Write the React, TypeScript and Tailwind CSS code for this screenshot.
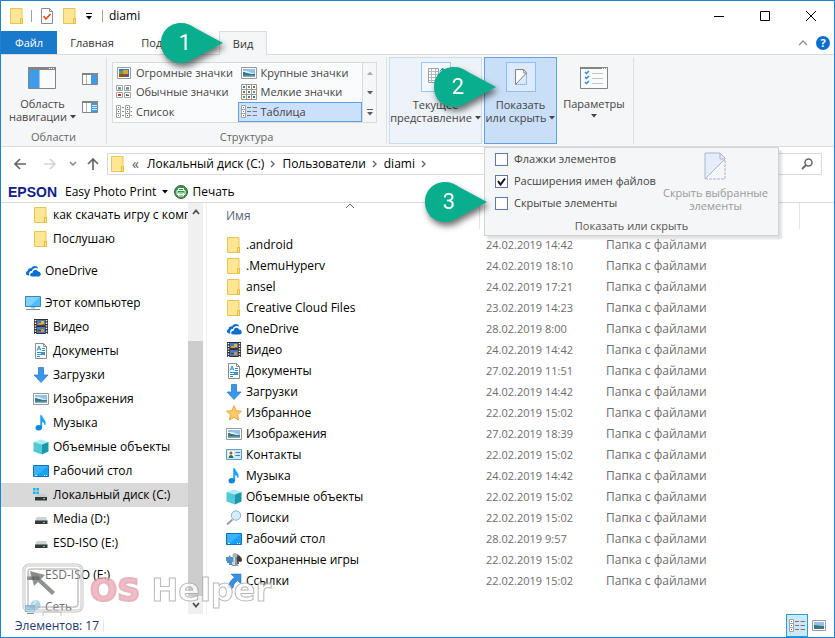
import type { ReactNode } from "react";

type IconName =
  | "folder" | "onedrive" | "pc" | "video" | "doc" | "download" | "picture" | "music" | "cube"
  | "desktop" | "sysdrive" | "drive" | "network" | "star" | "contact" | "search" | "games" | "link"
  | "huge" | "medium" | "small" | "list" | "table";

const shapes: Record<IconName, ReactNode> = {
  folder: (
    <>
      <path d="M1.500.5h11.500v10.500h.5v4.500h-12z" fill="#ffe694" stroke="#e9c44f" />
      <path d="M11.500 15.500v-5h2v5z" fill="#ffdf7e" stroke="#e6bd3f" />
    </>
  ),
  onedrive: (
    <>
      <path d="M3.500 12.500C.5 12.500 0 9 2.500 8 3 5.500 5 5 6 5.500 7 2.500 12 2 13.200 5.500 10 4 7 6 6.800 8 4.500 8 3.500 10 4.500 12.500z" fill="#0c6fd0" />
      <path d="M7 13.500c-2.500 0-2.500-3.800.6-3.800C7.600 6.500 12 5.500 13 8.500c3.500.2 3.700 5 .5 5z" fill="#0c6fd0" />
    </>
  ),
  pc: (
    <>
      <path d="M.5 1.500h15v10H.5z" fill="#4dbdfb" stroke="#3a86b5" />
      <path d="M1 2h14L5 11H1z" fill="#7fd2ff" />
      <path d="M6 12h4v1.500H6z" fill="#9dc3d8" />
      <path d="M1 14.500h14" stroke="#7890a0" />
    </>
  ),
  video: (
    <>
      <path d="M1 0h14v15H1z" fill="#2f2f33" />
      <path d="M2.500 1v14M13.500 1v14" stroke="#fff" strokeWidth="1.500" strokeDasharray="1.300 1.300" />
      <path d="M4 1h8v6H4zM4 8h8v6H4z" fill="#4978c8" />
      <path d="M5 4h4v2H5zM8 10h3v3H8z" fill="#c99a38" />
      <path d="M8 2h3v3H8z" fill="#e0bb30" />
      <path d="M4 6h8v1H4zM5 11h3v1H5z" fill="#5a3522" />
    </>
  ),
  doc: (
    <>
      <path d="M2.500.5h8l3 3v12h-11z" fill="#fff" stroke="#8c8c8c" />
      <path d="M10.500.5v3h3" fill="none" stroke="#8c8c8c" />
      <path d="M4 7.500 6 3l2 4.500M5 6h2M9 5.500h3M9 7.500h3M4 9.500h4M4 11.500h4M4 13.500h3" stroke="#2c8fd4" fill="none" />
      <path d="M8 9h4v3H8z" fill="#4a8fbe" />
    </>
  ),
  download: <path d="M5.500.5h5V8h4.500L8 15.500 1 8h4.500z" fill="#3996ea" stroke="#2d7dca" strokeWidth=".8" />,
  picture: (
    <>
      <path d="M.5 2.500h15v11H.5z" fill="#fff" stroke="#9a9a9a" />
      <path d="M2 4h12v8H2z" fill="#8fc2ee" />
      <path d="M2 6h4l8 3v3H2z" fill="#dff0f9" />
      <path d="M2 7c3 0 4 2 12 2v3H2z" fill="#3f7481" />
      <path d="M2 10.500h12V12H2z" fill="#77aec2" />
    </>
  ),
  music: (
    <>
      <path d="M7.500.5h1.400C9.500 4 13.500 5 12 10c-.6-2-1.600-3-3.100-3.200V13H7.500z" fill="#1ba1f2" stroke="#1ba1f2" strokeWidth=".5" />
      <ellipse cx="5.700" cy="12.700" rx="3.200" ry="2.700" fill="#1487dc" />
    </>
  ),
  cube: (
    <>
      <path d="M8 .5 15.500 3 9 5.500.5 3z" fill="#a8edf2" />
      <path d="M.5 3 9 5.500v10L.5 12.500z" fill="#53c9d6" />
      <path d="M9 5.500 15.500 3v9.500L9 15.500z" fill="#1b98aa" />
    </>
  ),
  desktop: (
    <>
      <path d="M.5 2.500h15v11H.5z" fill="#16a2f7" stroke="#1272b8" />
      <path d="M1 3h14L4 12H1z" fill="#39b3ff" />
      <path d="M2 12.500h2M11 12.500h1M13 12.500h1" stroke="#d5efff" />
    </>
  ),
  sysdrive: (
    <>
      <path d="M0 1h2.600v2.600H0zM3.400 1H6v2.600H3.400zM0 4.400h2.600V7H0zM3.400 4.400H6V7H3.400z" fill="#16b5f2" />
      <path d="M4 7h9l1 3H2z" fill="#c9cdd0" />
      <path d="M2 10h12v3.500H2z" fill="#35383b" />
      <path d="M10 11h2v1h-2z" fill="#5ee05e" />
    </>
  ),
  drive: (
    <>
      <path d="M3.500 6h9.500l1.500 4H2z" fill="#cfd2d4" />
      <path d="M2 9.500h12.500V13H2z" fill="#35383b" />
      <path d="M10 11h2v1h-2z" fill="#5ee05e" />
    </>
  ),
  network: (
    <>
      <circle cx="10.500" cy="6" r="5" fill="#6db8e8" />
      <path d="M8 2c3-1 3 2 1 3s1 4 4 3" stroke="#bde4c4" fill="none" strokeWidth="1.500" />
      <path d="M.5 6.500h9v6h-9z" fill="#40b2f5" stroke="#3a86b5" />
      <path d="M2 14.500h7" stroke="#7890a0" />
    </>
  ),
  star: <path d="m8 .7 2.200 5 5.300.5-4 3.600 1.200 5.300L8 12.300l-4.700 2.800 1.200-5.300-4-3.600 5.300-.5z" fill="#ffc96b" stroke="#ee9c35" strokeWidth=".9" />,
  contact: (
    <>
      <path d="M.5 2.500h15v10H.5z" fill="#cfe9f6" stroke="#5c9fbe" />
      <path d="M2 4h6v7H2z" fill="#fff" />
      <circle cx="5" cy="6" r="1.600" fill="#8a5f3b" />
      <path d="M2.500 11c0-4 5-4 5 0z" fill="#34704f" />
      <path d="M9.500 5.500H14M9.500 8.500H14" stroke="#3c86b0" />
    </>
  ),
  search: (
    <>
      <path d="m1 14.500 5.500-5" stroke="#8d9aa5" strokeWidth="1.800" />
      <circle cx="10" cy="5.500" r="4.700" fill="#d5ecfa" stroke="#8eb0c7" />
    </>
  ),
  games: (
    <>
      <path d="M0 5h3c-1-2 2-2 1.500 0H7v3h1.500v2H6v3H3v-2H1V9H0z" fill="#4c94c8" />
      <path d="M11 2c2 1.500 5 3 5 6 0 2-2 2.500-3.500 1.500L13 12H9V3z" fill="#3b4045" />
      <circle cx="9" cy="3.500" r="2.500" fill="#aab5ba" />
      <path d="M7.500 5h3l1 7 1 2h-7l1-2z" fill="#8a989f" />
      <path d="M8 5h1v8H7z" fill="#d8e0e4" />
    </>
  ),
  link: <path d="M5 1h10v10l-3.300-3.300C8.500 9.500 7.500 12 7 15H2c.3-4 2.500-7.500 6.300-10.700z" fill="#3b8fe0" stroke="#2c78c4" strokeWidth=".6" />,
  huge: (
    <>
      <path d="M1.500 2.500h13v11h-13z" fill="#fff" stroke="#9a9a9a" />
      <path d="M3 4h10v8H3z" fill="#3f6fd0" />
      <path d="M3 6h5v3H3z" fill="#50a648" />
      <path d="M7 5h5v5H7z" fill="#d4a62b" />
      <path d="M3 9h10v3H3z" fill="#9c4a24" />
      <path d="M9 10h4v2H9z" fill="#3b62b5" />
    </>
  ),
  medium: (
    <>
      <path d="M.5 1.500h6v5h-6zM8.500 1.500h6v5h-6zM.5 8.500h6v5h-6zM8.500 8.500h6v5h-6z" fill="#fff" stroke="#a3a3a3" />
      <path d="M2 3h3v2H2zM10 3h3v2h-3z" fill="#5b9dd8" />
      <path d="M2 5h3M10 5h3" stroke="#547d5c" />
      <path d="M2 10h3v2H2z" fill="#c7332b" />
      <path d="M10 10h3v2h-3z" fill="#3060c0" />
      <path d="M11 10h2v1h-2z" fill="#e0ae28" />
    </>
  ),
  small: (
    <>
      <path d="M.5.5h15v15H.5zM5.500 0v16M10.500 0v16M0 5.500h16M0 10.500h16" fill="#fff" stroke="#9a9a9a" />
      <path d="M2 2h2v2H2zM7 7h2v2H7zM12 12h2v2h-2z" fill="#4477a8" />
      <path d="M12 2h2v2h-2zM2 7h2v2H2zM7 12h2v2H7z" fill="#a25f3b" />
      <path d="M7 2h2v2H7zM12 7h2v2h-2zM2 12h2v2H2z" fill="#5d9a63" />
    </>
  ),
  list: (
    <>
      <path d="M.5 1.500h4v12h-4zM.5 5.500h4M.5 9.500h4M9.500 1.500h4v12h-4zM9.500 5.500h4M9.500 9.500h4" fill="#fff" stroke="#a3a3a3" />
      <path d="M2 3h1v1H2zM11 7h1v1h-1zM2 11h1v1H2z" fill="#4477a8" />
      <path d="M2 7h1v1H2zM11 3h1v1h-1zM11 11h1v1h-1z" fill="#c03a2c" />
      <path d="M6 3.500h2M6 7.500h2M6 11.500h2M14.500 3.500H16M14.500 7.500H16M14.500 11.500H16" stroke="#8a8a8a" />
    </>
  ),
  table: (
    <>
      <path d="M.5 1.500h4v12h-4zM.5 5.500h4M.5 9.500h4" fill="#fff" stroke="#a3a3a3" />
      <path d="M2 3h1v1H2zM2 7h1v1H2z" fill="#4477a8" />
      <path d="M2 11h1v1H2z" fill="#c03a2c" />
      <path d="M6 3.500h4M11.500 3.500H16M6 7.500h4M11.500 7.500H16M6 11.500h4M11.500 11.500H16" stroke="#777" />
    </>
  ),
};

function Icon({ name }: { name: IconName }) {
  return (
    <svg viewBox="0 0 16 16" className="size-4 shrink-0" aria-hidden="true">
      {shapes[name]}
    </svg>
  );
}

function Caret({ className = "" }: { className?: string }) {
  return (
    <svg viewBox="0 0 6 4" className={`inline-block h-1 w-1.5 shrink-0 ${className}`} aria-hidden="true">
      <path d="M0 0h6L3 3.500z" fill="currentColor" />
    </svg>
  );
}

function Pin({ n, className }: { n: number; className: string }) {
  return (
    <span
      className={`pointer-events-none absolute z-30 flex h-10 w-[62px] drop-shadow-[2px_4px_3px_rgba(0,0,0,0.55)] ${className}`}
    >
      <svg viewBox="0 0 62 40" className="absolute inset-0 size-full" aria-hidden="true">
        <path d="M20 0C8 0 0 9 0 20s8 20 20 20c6 0 10-2 15-5.500L62 20 35 5.500C30 2 26 0 20 0z" fill="#09ae8f" />
      </svg>
      <span className="relative flex w-[48px] items-center justify-center font-[Roboto,sans-serif] text-[22px] text-white">
        {n}
      </span>
    </span>
  );
}

function PaneIcon({ mode }: { mode: "nav" | "preview" | "details" }) {
  return mode === "nav" ? (
    <svg viewBox="0 0 28 22" className="h-[22px] w-7" aria-hidden="true">
      <path d="M.5.500h27v21H.5z" fill="#fafafa" stroke="#818589" />
      <path d="M0 0h28v3H0z" fill="#818589" />
      <path d="M21 1.500h1M23 1.500h1M25 1.500h1" stroke="#fff" />
      <path d="M1 3h10v18H1z" fill="#3f9be8" />
      <path d="M11.500 3v18" stroke="#9bc4e6" />
    </svg>
  ) : (
    <svg viewBox="0 0 16 12" className="h-3 w-4" aria-hidden="true">
      <path d="M.5.500h15v11H.5z" fill="#fff" stroke="#818589" />
      <path d="M0 0h16v2H0z" fill="#818589" />
      <path d="M4.500 2v9" stroke="#b5b5b5" />
      <path d="M9 2h6v9H9z" fill="#3f9be8" />
      {mode === "details" && <path d="M10 4.500h5M10 6.500h5M10 8.500h5" stroke="#d9ecfb" />}
    </svg>
  );
}

function HideIcon({ muted = false }: { muted?: boolean }) {
  return (
    <svg viewBox="0 0 22 28" className={muted ? "h-7 w-[22px]" : "h-4 w-3"} preserveAspectRatio="none" aria-hidden="true">
      <path d="M1 27V1h15l5 5v1L1 27z" fill={muted ? "#e4edf9" : "#fff"} stroke={muted ? "#a9b6cd" : "#808080"} vectorEffect="non-scaling-stroke" />
      <path d="M16 1v6h5" fill="none" stroke={muted ? "#a9b6cd" : "#808080"} vectorEffect="non-scaling-stroke" />
      <path d="M21 8v19H2" fill="none" stroke={muted ? "#a9b6cd" : "#3d8fd6"} strokeDasharray={muted ? "3 1" : "1 1"} vectorEffect="non-scaling-stroke" />
    </svg>
  );
}

const layouts: { name: string; icon: IconName; active?: boolean }[] = [
  { name: "Огромные значки", icon: "huge" },
  { name: "Крупные значки", icon: "picture" },
  { name: "Обычные значки", icon: "medium" },
  { name: "Мелкие значки", icon: "small" },
  { name: "Список", icon: "list" },
  { name: "Таблица", icon: "table", active: true },
];

const tree: { name: string; icon: IconName; top?: boolean; gap?: boolean; active?: boolean }[] = [
  { name: "как скачать игру с компьютера", icon: "folder" },
  { name: "Послушаю", icon: "folder" },
  { name: "OneDrive", icon: "onedrive", top: true, gap: true },
  { name: "Этот компьютер", icon: "pc", top: true, gap: true },
  { name: "Видео", icon: "video" },
  { name: "Документы", icon: "doc" },
  { name: "Загрузки", icon: "download" },
  { name: "Изображения", icon: "picture" },
  { name: "Музыка", icon: "music" },
  { name: "Объемные объекты", icon: "cube" },
  { name: "Рабочий стол", icon: "desktop" },
  { name: "Локальный диск (C:)", icon: "sysdrive", active: true },
  { name: "Media (D:)", icon: "drive" },
  { name: "ESD-ISO (E:)", icon: "drive" },
  { name: "ESD-ISO (E:)", icon: "drive", top: true, gap: true },
  { name: "Сеть", icon: "network", top: true, gap: true },
];

const files: { name: string; icon: IconName; date: string }[] = [
  { name: ".android", icon: "folder", date: "24.02.2019 14:42" },
  { name: ".MemuHyperv", icon: "folder", date: "24.02.2019 18:10" },
  { name: "ansel", icon: "folder", date: "24.02.2019 17:21" },
  { name: "Creative Cloud Files", icon: "folder", date: "23.02.2019 14:23" },
  { name: "OneDrive", icon: "onedrive", date: "28.02.2019 8:00" },
  { name: "Видео", icon: "video", date: "24.02.2019 14:42" },
  { name: "Документы", icon: "doc", date: "27.02.2019 11:51" },
  { name: "Загрузки", icon: "download", date: "24.02.2019 14:42" },
  { name: "Избранное", icon: "star", date: "22.02.2019 15:02" },
  { name: "Изображения", icon: "picture", date: "27.02.2019 18:39" },
  { name: "Контакты", icon: "contact", date: "22.02.2019 15:02" },
  { name: "Музыка", icon: "music", date: "24.02.2019 14:42" },
  { name: "Объемные объекты", icon: "cube", date: "22.02.2019 15:02" },
  { name: "Поиски", icon: "search", date: "22.02.2019 15:02" },
  { name: "Рабочий стол", icon: "desktop", date: "28.02.2019 9:57" },
  { name: "Сохраненные игры", icon: "games", date: "22.02.2019 15:02" },
  { name: "Ссылки", icon: "link", date: "22.02.2019 15:02" },
];

const toggles = [
  { label: "Флажки элементов", on: false },
  { label: "Расширения имен файлов", on: true },
  { label: "Скрытые элементы", on: false },
];

function TitleBar() {
  return (
    <header className="flex h-[30px] shrink-0 items-center pl-2">
      <Icon name="folder" />
      <span className="ml-1.5 h-3 w-px bg-gray-400" />
      <button aria-label="Свойства" className="ml-2">
        <svg viewBox="0 0 14 16" className="h-4 w-3.5" aria-hidden="true">
          <path d="M1.500.5h8l3 3v12h-11z" fill="#fff" stroke="#8c8c8c" />
          <path d="M9.500.5v3h3" fill="none" stroke="#8c8c8c" />
          <path d="m3.500 8 2.500 3 4.500-5" fill="none" stroke="#e2521f" strokeWidth="1.800" />
        </svg>
      </button>
      <button aria-label="Новая папка" className="ml-2">
        <Icon name="folder" />
      </button>
      <button aria-label="Настройка панели" className="ml-1 flex flex-col items-center gap-0.5 px-1">
        <span className="h-px w-1.5 bg-black" />
        <Caret />
      </button>
      <span className="mx-1.5 h-3 w-px bg-gray-400" />
      <h1>diami</h1>
      <div className="ml-auto flex">
        <button aria-label="Свернуть" className="flex w-[46px] justify-center">
          <svg viewBox="0 0 10 10" className="size-2.5"><path d="M0 5.500h10" stroke="#000" /></svg>
        </button>
        <button aria-label="Развернуть" className="flex w-[46px] justify-center">
          <svg viewBox="0 0 10 10" className="size-2.5"><path d="M.5.500h9v9h-9z" fill="none" stroke="#000" /></svg>
        </button>
        <button aria-label="Закрыть" className="flex w-[46px] justify-center">
          <svg viewBox="0 0 10 10" className="size-2.5"><path d="m0 0 10 10M10 0 0 10" stroke="#000" /></svg>
        </button>
      </div>
    </header>
  );
}

function Tabs() {
  return (
    <div className="flex h-6 shrink-0 border-b border-[#dadbdc] text-[11px] text-[#333]">
      <button className="w-14 bg-[#1979ca] text-white">Файл</button>
      <button className="w-[70px]">Главная</button>
      <button className="w-[92px]">Поделиться</button>
      <button className="relative z-20 -mb-px w-12 border border-b-0 border-[#dadbdc] bg-[#f5f6f7]">
        Вид
        <Pin n={1} className="-left-[59px] -top-[9px]" />
      </button>
      <div className="ml-auto flex items-center gap-2 pr-1">
        <button aria-label="Свернуть ленту">
          <svg viewBox="0 0 10 6" className="h-1.5 w-2.5"><path d="m1 5 4-4 4 4" fill="none" stroke="#8f8f8f" strokeWidth="1.300" /></svg>
        </button>
        <button aria-label="Справка" className="size-3.5 rounded-full bg-[#0a6fcb] text-[11px] font-bold leading-none text-white">
          ?
        </button>
      </div>
    </div>
  );
}

function ShowHideMenu() {
  return (
    <div className="absolute -left-px top-[89px] z-10 w-[295px] border border-[#d2d3d4] bg-[#f5f6f7] text-left text-[#444] shadow-[3px_3px_2px_rgba(0,0,0,0.12)]">
      <div className="flex justify-between">
        <div className="pl-2.5">
          {toggles.map((t) => (
            <label key={t.label} className="flex h-[22px] items-center gap-1.5 whitespace-nowrap">
              <span className="relative flex size-[13px]">
                <input
                  type="checkbox"
                  defaultChecked={t.on}
                  className="peer size-[13px] appearance-none border border-[#5b78a8] bg-white"
                />
                <svg viewBox="0 0 13 13" className="pointer-events-none absolute inset-0 hidden peer-checked:block">
                  <path d="m3 6 2.500 3.500L10 3.500" fill="none" stroke="#111" strokeWidth="2" />
                </svg>
              </span>
              {t.label}
            </label>
          ))}
        </div>
        <button disabled className="flex flex-col items-center whitespace-nowrap pr-2.5 pt-1 leading-[13px] text-[#999]">
          <HideIcon muted />
          <span className="mt-1.5">
            Скрыть выбранные
            <br />
            элементы
          </span>
        </button>
      </div>
      <div className="h-[21px] text-center leading-6 text-[#555]">Показать или скрыть</div>
      <Pin n={3} className="-left-[60px] top-[34px]" />
    </div>
  );
}

function Ribbon() {
  return (
    <section className="flex h-[92px] shrink-0 border-b border-[#dadbdc] bg-[#f5f6f7] py-0.5 text-[11px] text-[#444]">
      <div className="flex w-[106px] flex-col border-r border-[#dfe0e1]">
        <div className="flex flex-1 justify-between px-2">
          <button className="flex flex-col items-center pt-2.5 leading-[13px]">
            <PaneIcon mode="nav" />
            <span className="mt-2 whitespace-nowrap">
              Область
              <br />
              навигации <Caret className="mb-0.5" />
            </span>
          </button>
          <div className="flex flex-col gap-4 pt-4">
            <button aria-label="Область просмотра"><PaneIcon mode="preview" /></button>
            <button aria-label="Область сведений"><PaneIcon mode="details" /></button>
          </div>
        </div>
        <div className="text-center leading-[15px] text-[#666]">Области</div>
      </div>

      <div className="flex w-[280px] flex-col border-r border-[#dfe0e1] px-[5px] pt-[5px]">
        <div className="mr-1 flex h-[61px] border border-[#d8dadc] bg-[#fafbfc]">
          <div className="grid flex-1 grid-cols-2">
            {layouts.map((l) => (
              <button
                key={l.name}
                aria-pressed={!!l.active}
                className={`flex items-center gap-1 whitespace-nowrap border px-0.5 ${
                  l.active ? "border-[#62a2e4] bg-[#cbe1fb]" : "border-transparent"
                }`}
              >
                <Icon name={l.icon} />
                {l.name}
              </button>
            ))}
          </div>
          <div className="flex w-[14px] flex-col border-l border-[#d8dadc] bg-[#f5f6f7] text-[#555f70]">
            <button aria-label="Вверх" className="flex flex-1 items-center justify-center text-[#aab]"><Caret className="rotate-180" /></button>
            <button aria-label="Вниз" className="flex flex-1 items-center justify-center"><Caret /></button>
            <button aria-label="Ещё" className="flex flex-1 flex-col items-center justify-center gap-0.5">
              <span className="h-px w-1.5 bg-current" />
              <Caret />
            </button>
          </div>
        </div>
        <div className="mt-auto text-center leading-[15px] text-[#666]">Структура</div>
      </div>

      <div className="flex gap-0.5 border-r border-[#dfe0e1] pl-0.5 pr-1">
        <button className="flex w-[93px] flex-col items-center whitespace-nowrap border border-[#c5dcf4] bg-[#edf3f9] pt-1 leading-[13px]">
          <span className="flex size-[30px] items-center justify-center border border-[#99c9fb] bg-[#f2f7fc]">
            <svg viewBox="0 0 18 22" className="h-[22px] w-[18px]" aria-hidden="true">
              <path d="M1.500 2.500h10v14h-10z" fill="#fff" stroke="#9aa0a6" />
              <path d="M4.500 3v13M8.500 3v13M2 5.500h9M2 8.500h9M2 11.500h9M2 14.500h9" stroke="#b4b9be" />
              <path d="M15.500 17V3M13 5.500 15.500 2 18 5.500" fill="none" stroke="#2c7ec9" />
            </svg>
          </span>
          <span className="mt-1.5">
            Текущее
            <br />
            представление <Caret className="mb-0.5" />
          </span>
        </button>
        <div className="relative w-[73px] border border-[#62a2e4] bg-[#c9dff7]">
          <button aria-expanded="true" className="flex w-full flex-col items-center whitespace-nowrap pt-1 leading-[13px]">
            <span className="flex size-[30px] items-center justify-center border border-[#88c0f9] bg-[#dceafb]">
              <HideIcon />
            </span>
            <span className="mt-1.5">
              Показать
              <br />
              или скрыть <Caret className="mb-0.5" />
            </span>
          </button>
          <Pin n={2} className="-left-[51px] top-[9px]" />
          <ShowHideMenu />
        </div>
        <button className="flex w-[70px] flex-col items-center pt-2.5 leading-[13px]">
          <svg viewBox="0 0 28 22" className="h-[22px] w-7" aria-hidden="true">
            <path d="M.5.500h27v21H.5z" fill="#fafafa" stroke="#818589" />
            <path d="M0 0h28v2H0z" fill="#818589" />
            <path d="M22 1.500h1M24 1.500h1M26 1.500h1" stroke="#fff" />
            <path d="m5 5 1.500 1.500L9 4M5 10l1.500 1.500L9 9M5 15l1.500 1.500L9 14" fill="none" stroke="#2f8cdf" strokeWidth="1.500" />
            <path d="M12 6.500h11M12 11.500h11M12 16.500h11" stroke="#c3c3c3" />
          </svg>
          <span className="mt-2">Параметры</span>
          <Caret className="mt-1" />
        </button>
      </div>
    </section>
  );
}

function AddressBar() {
  return (
    <div className="flex h-[34px] shrink-0 items-center px-3">
      <button aria-label="Назад">
        <svg viewBox="0 0 14 12" className="h-3 w-3.5"><path d="M13 6H2M7 1 2 6l5 5" fill="none" stroke="#666" strokeWidth="1.700" /></svg>
      </button>
      <button aria-label="Вперёд" className="ml-4">
        <svg viewBox="0 0 14 12" className="h-3 w-3.5"><path d="M1 6h11M7 1l5 5-5 5" fill="none" stroke="#d5d5d5" strokeWidth="1.700" /></svg>
      </button>
      <button aria-label="Журнал" className="ml-3">
        <svg viewBox="0 0 8 6" className="h-1.5 w-2"><path d="m1 1 3 3 3-3" fill="none" stroke="#888" strokeWidth="1.500" /></svg>
      </button>
      <button aria-label="Вверх" className="ml-2.5">
        <svg viewBox="0 0 12 14" className="h-3.5 w-3"><path d="M6 13V2M1 7l5-5 5 5" fill="none" stroke="#666" strokeWidth="1.700" /></svg>
      </button>
      <div className="ml-2 flex h-[22px] flex-1 items-center border border-[#d9d9d9] pl-0.5">
        <Icon name="folder" />
        <span className="ml-1.5 w-[15px] text-[14px] leading-none text-[#555]">«</span>
        {["Локальный диск (C:)", "Пользователи", "diami"].map((p) => (
          <button key={p} className="flex items-center whitespace-nowrap">
            {p}
            <svg viewBox="0 0 6 8" className="mx-1.5 h-2 w-1.5"><path d="m1 1 3 3-3 3" fill="none" stroke="#666" strokeWidth="1.400" /></svg>
          </button>
        ))}
      </div>
      <label className="ml-3 flex h-[22px] w-60 items-center border border-[#d9d9d9] pr-2">
        <input type="search" aria-label="Поиск" className="min-w-0 flex-1 outline-none" />
        <svg viewBox="0 0 12 12" className="size-3"><circle cx="7.500" cy="4.500" r="3.500" fill="none" stroke="#666" strokeWidth="1.500" /><path d="M5 7 1 11" stroke="#666" strokeWidth="1.800" /></svg>
      </label>
    </div>
  );
}

function Watermark() {
  return (
    <div className="pointer-events-none absolute bottom-[20px] left-[21px] z-20 flex items-center opacity-80" aria-hidden="true">
      <svg viewBox="0 0 62 54" className="h-[54px] w-[62px]">
        <rect x="2" y="2" width="58" height="46" rx="5" fill="#fff" fillOpacity=".5" stroke="#b5b5b5" strokeWidth="3" />
        <rect x="2" y="2" width="58" height="46" rx="5" fill="none" stroke="#fff" />
        <rect x="6" y="6" width="50" height="38" rx="3" fill="none" stroke="#b5b5b5" strokeWidth="1.500" />
        <path d="m8 8 15 4-4 4 14 13-3 3-14-13-4 4z" fill="#777" />
        <path d="M21 53v-4h18v4" fill="none" stroke="#b5b5b5" />
      </svg>
      <span className="ml-1.5 font-['DejaVu_Sans',sans-serif] text-[32px] font-bold leading-none">
        <span className="text-[#f3a9b6] [-webkit-text-stroke:2px_#dba4af]">OS</span>{" "}
        <span className="text-white [-webkit-text-stroke:1px_#a8a8a8]">Helper</span>
      </span>
    </div>
  );
}

function Sidebar() {
  return (
    <div className="flex w-[206px] shrink-0 border-r border-[#f0f0f0]">
      <nav className="w-[187px] overflow-hidden">
        {tree.map((t, i) => (
          <a
            key={i}
            href="#"
            className={`flex h-6 items-center gap-1 overflow-hidden whitespace-nowrap ${t.top ? "pl-6" : "pl-8"} ${
              t.gap ? "mt-2" : ""
            } ${t.active ? "bg-[#d9d9d9]" : ""}`}
          >
            <Icon name={t.icon} />
            {t.name}
          </a>
        ))}
      </nav>
      <div className="flex w-[15px] flex-col bg-[#f0f0f0]">
        <svg viewBox="0 0 8 6" className="mx-auto mt-1.5 h-1.5 w-2"><path d="m1 5 3-3.500L7 5" fill="none" stroke="#505050" strokeWidth="1.800" /></svg>
        <div className="mt-auto h-[62%] bg-[#cdcdcd]" />
        <svg viewBox="0 0 8 6" className="mx-auto my-1.5 h-1.5 w-2"><path d="m1 1 3 3.500L7 1" fill="none" stroke="#505050" strokeWidth="1.800" /></svg>
      </div>
    </div>
  );
}

function FileTable() {
  return (
    <div className="relative min-w-0 flex-1 overflow-hidden">
      <svg viewBox="0 0 10 6" className="absolute left-[138px] top-0 h-1.5 w-2.5"><path d="m1 5 4-4 4 4" fill="none" stroke="#666" /></svg>
      <table className="w-full table-fixed text-left">
        <colgroup>
          <col className="w-[273px]" />
          <col className="w-[120px]" />
          <col className="w-[200px]" />
          <col />
        </colgroup>
        <thead className="text-[#56647c]">
          <tr className="h-[31px] align-top leading-[26px]">
            <th className="pl-[19px] font-normal"><div className="border-r border-[#e5e5e5]">Имя</div></th>
            <th className="font-normal"><div className="h-[26px] border-r border-[#e5e5e5]" /></th>
            <th className="font-normal"><div className="h-[26px] border-r border-[#e5e5e5]" /></th>
            <th />
          </tr>
        </thead>
        <tbody>
          {files.map((f) => (
            <tr key={f.name} className="h-[21px] whitespace-nowrap leading-[21px] text-[#6d6d6d]">
              <td className="pl-[19px] text-black">
                <div className="flex items-center gap-1">
                  <Icon name={f.icon} />
                  {f.name}
                </div>
              </td>
              <td className="pl-1.5 text-[11px]">{f.date}</td>
              <td className="pl-1.5">Папка с файлами</td>
              <td />
            </tr>
          ))}
        </tbody>
      </table>
    </div>
  );
}

export default function App() {
  return (
    <main className="flex h-screen flex-col overflow-hidden border border-[#1883d7] bg-white font-['Open_Sans','Noto_Sans',sans-serif] text-[12px] leading-4 text-black">
      <TitleBar />
      <Tabs />
      <Ribbon />
      <AddressBar />
      <div className="flex h-[22px] shrink-0 items-center border-b border-[#dadada] pl-[7px]">
        <span className="font-['Liberation_Sans',sans-serif] text-[14px] font-bold text-[#10218b]">EPSON</span>
        <button className="ml-2 flex items-center gap-1.5">
          Easy Photo Print
          <Caret />
        </button>
        <button className="ml-1.5 flex items-center gap-1">
          <svg viewBox="0 0 14 14" className="size-3.5" aria-hidden="true">
            <circle cx="7" cy="7" r="6.500" fill="#2f9e3f" stroke="#555" />
            <path d="M4.500 5.500v-2h5v2M3 5.500h8v4H3zM4.500 8h5v3h-5z" fill="#2f9e3f" stroke="#fff" />
          </svg>
          Печать
        </button>
      </div>
      <div className="flex min-h-0 flex-1">
        <Sidebar />
        <FileTable />
      </div>
      <footer className="relative flex h-[23px] shrink-0 items-center pl-3.5 text-[#1e3668]">
        <Watermark />
        <span>Элементов: 17</span>
        <span className="ml-1 h-3 w-px bg-[#e5e5e5]" />
        <button aria-label="Таблица" className="ml-auto flex h-[23px] w-[22px] items-center justify-center border border-[#26a0da] bg-[#cce8f6]">
          <Icon name="table" />
        </button>
        <button aria-label="Крупные значки" className="ml-1 mr-2">
          <svg viewBox="0 0 14 11" className="h-[11px] w-3.5" aria-hidden="true">
            <path d="M.5.500h13v10H.5z" fill="#fff" stroke="#9a9a9a" />
            <path d="M2 2h10v7H2z" fill="#8fc2ee" />
            <path d="M2 5c3 0 5 1 10 1v3H2z" fill="#3f7481" />
          </svg>
        </button>
      </footer>
    </main>
  );
}
